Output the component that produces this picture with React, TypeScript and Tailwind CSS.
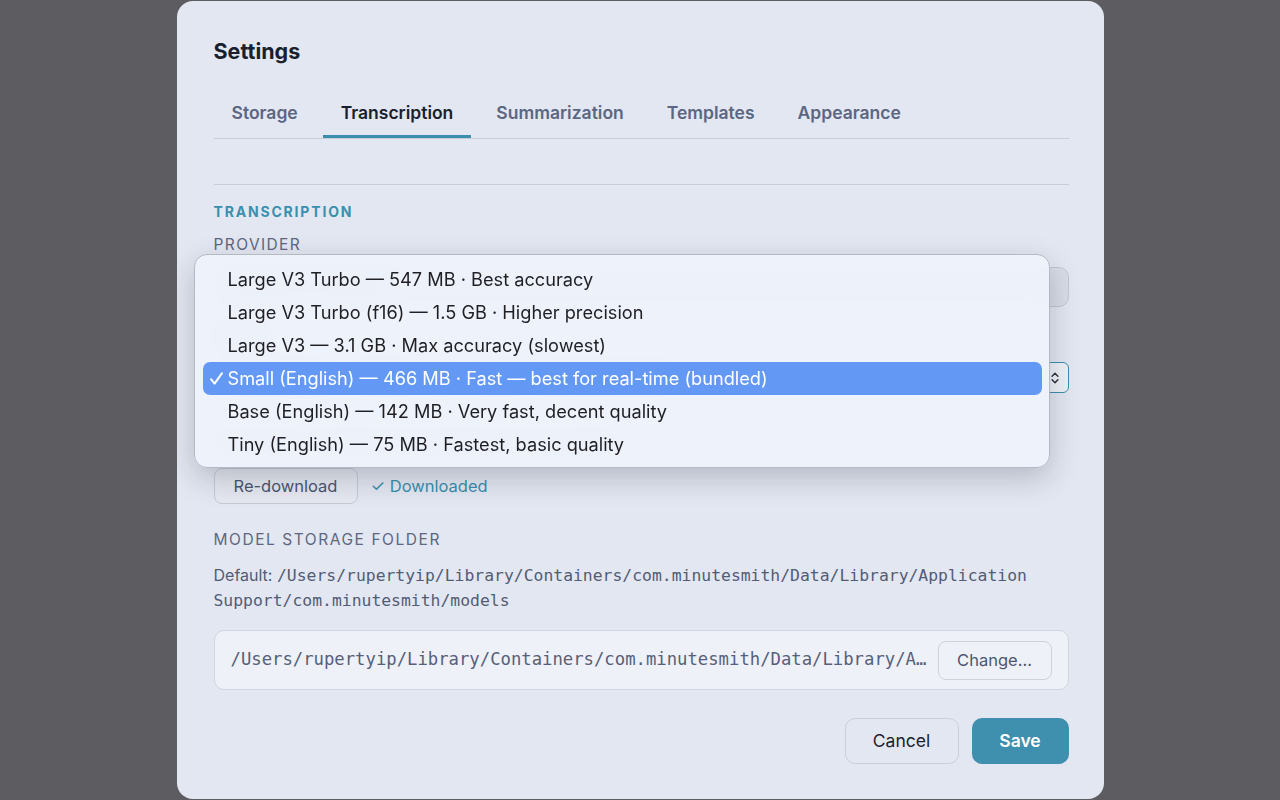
import { ChevronsUpDown } from 'lucide-react';

const tabs = ['Storage', 'Transcription', 'Summarization', 'Templates', 'Appearance'];

const models = [
  { label: 'Large V3 Turbo — 547 MB · Best accuracy', selected: false },
  { label: 'Large V3 Turbo (f16) — 1.5 GB · Higher precision', selected: false },
  { label: 'Large V3 — 3.1 GB · Max accuracy (slowest)', selected: false },
  { label: 'Small (English) — 466 MB · Fast — best for real-time (bundled)', selected: true },
  { label: 'Base (English) — 142 MB · Very fast, decent quality', selected: false },
  { label: 'Tiny (English) — 75 MB · Fastest, basic quality', selected: false },
];

const sans = "font-['Inter','Noto_Sans',sans-serif]";
const mono = "font-['DejaVu_Sans_Mono','Liberation_Mono',monospace]";

const App = () => {
  const active = 'Transcription';

  return (
    <div className={`min-h-screen w-full bg-[#5c5c61] flex justify-center ${sans}`}>
      <div className="relative mt-[1px] w-[927px] h-[798px] rounded-[16px] bg-[#e3e7f1] pl-[37px] pr-[35px] pt-[36px] overflow-hidden">
        <h2 className="text-[21.5px] leading-[28px] font-bold text-[#1a1f2e]">Settings</h2>

        {/* tabs */}
        <div className="mt-[25px] flex gap-[7px] border-b border-[#c7ccd7]">
          {tabs.map(tab => (
            <button
              key={tab}
              className={`px-[18px] pt-[11px] pb-[10px] text-[17.5px] leading-[24px] font-semibold border-b-[3px] ${
                tab === active ? 'text-[#1a1f2e] border-[#3a8fae]' : 'text-[#5b6682] border-transparent'
              }`}
            >
              {tab}
            </button>
          ))}
        </div>

        <div className="mt-[45px] border-t border-[#c7ccd7] pt-[18px] flex flex-col">
          <div className="text-[14px] leading-[18px] font-bold tracking-[0.13em] text-[#3a8fae]">TRANSCRIPTION</div>
          <div className="mt-[14px] text-[15.5px] leading-[20px] tracking-[0.09em] text-[#5e6680]">PROVIDER</div>
          <div className="mt-[12px] h-[40px] rounded-[10px] border border-[#c2c7d1] bg-[#d9dde7] px-[16px] flex items-center text-[16px] text-[#1f2430]">
            Whisper (on-device)
          </div>
          <div className="mt-[19px] text-[15.5px] leading-[20px] tracking-[0.09em] text-[#5e6680]">MODEL</div>
          <div className="mt-[16px] h-[31px] rounded-[6px] border border-[#3a8fae] bg-[#eef1f7] pl-[12px] pr-[6px] flex items-center justify-between text-[15px] text-[#1f2430]">
            <span>Small (English) — 466 MB · Fast — best for real-time (bundled)</span>
            <ChevronsUpDown className="w-[14px] h-[14px] text-[#2b2f3a]" strokeWidth={2.4} />
          </div>
          <div className="mt-[26px] h-[42px] flex items-center text-[14px] text-[#5b6682]">
            Runs locally on this Mac. Recommended for live transcription.
          </div>
          <div className="mt-[7px] flex items-center gap-[13px]">
            <button className="h-[36px] w-[144px] rounded-[8px] border border-[#c5cbd6] bg-[#e5e8f0] text-[16.5px] text-[#4b5570]">
              Re-download
            </button>
            <span className="text-[16.5px] text-[#3a8fae]">✓ Downloaded</span>
          </div>

          <div className="mt-[26px] text-[15.5px] leading-[20px] tracking-[0.1em] text-[#5e6680]">MODEL STORAGE FOLDER</div>
          <p className="mt-[13px] text-[16px] leading-[25px] text-[#525c75] pr-[20px]">
            Default: <span className={`${mono} text-[16.4px]`}>/Users/rupertyip/Library/Containers/com.minutesmith/Data/Library/Application Support/com.minutesmith/models</span>
          </p>
          <div className="mt-[17px] h-[60px] rounded-[10px] border border-[#d0d5df] bg-[#eef1f7] pl-[16px] pr-[16px] flex items-center gap-[8px]">
            <span className={`${mono} flex-1 min-w-0 truncate text-[17.25px] text-[#56607a]`}>
              /Users/rupertyip/Library/Containers/com.minutesmith/Data/Library/Application Support/com.minutesmith/models
            </span>
            <button className="h-[39px] w-[114px] shrink-0 rounded-[8px] border border-[#cdd2dc] bg-[#eef1f7] text-[16.5px] text-[#4b5570]">
              Change...
            </button>
          </div>

          <div className="mt-[28px] flex justify-end gap-[13px]">
            <button className="h-[46px] w-[114px] rounded-[10px] border border-[#c9ced8] bg-[#e3e7f1] text-[17.5px] text-[#1c2230]">
              Cancel
            </button>
            <button className="h-[46px] w-[97px] rounded-[10px] bg-[#3f8fae] text-[17.5px] font-semibold text-white">
              Save
            </button>
          </div>
        </div>

        {/* native select menu, open */}
        <div className="absolute left-[17px] top-[253px] w-[856px] h-[214px] rounded-[13px] border border-[#b4b9c4] bg-[#eef2fb]/[0.95] backdrop-blur-md shadow-[0_10px_30px_rgba(20,24,40,0.22)] pt-[8px] pb-[6px] pl-[8px] pr-[7px]">
          {models.map(m => (
            <div
              key={m.label}
              className={`relative h-[33px] rounded-[7px] pl-[25px] flex items-center text-[18.2px] ${
                m.selected ? 'bg-[#6399f5] text-white' : 'text-[#1f1f24]'
              }`}
            >
              {m.selected && (
                <svg className="absolute left-[6px] top-[9px] w-[15px] h-[15px]" viewBox="0 0 15 15" fill="none">
                  <path d="M2 8.2 L5.6 12.6 L13 2.2" stroke="white" strokeWidth="2" strokeLinecap="round" strokeLinejoin="round" />
                </svg>
              )}
              {m.label}
            </div>
          ))}
        </div>
      </div>
    </div>
  );
};

export default App;
